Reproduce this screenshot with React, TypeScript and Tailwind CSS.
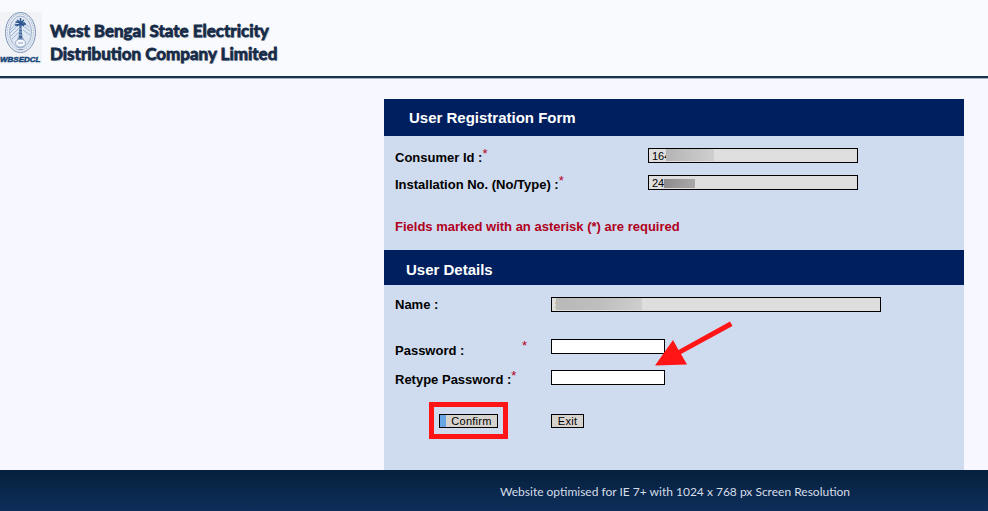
import type { ReactNode } from "react";

const field =
  "h-[15px] rounded-none border border-black px-[3px] font-['Liberation_Sans',Arial,sans-serif] text-[11px] leading-[13px] font-normal text-black outline-none";
const button =
  "h-[14px] cursor-pointer border border-black text-center font-['Liberation_Sans',Arial,sans-serif] text-[11px] leading-[12px] font-normal tracking-wide text-black";

function Star() {
  return <span className="block self-start text-[13px] leading-[13px] font-normal text-[#b8001c]">*</span>;
}

function Label({ htmlFor, children, required }: { htmlFor: string; children: ReactNode; required?: boolean }) {
  return (
    <label htmlFor={htmlFor} className="flex items-center">
      <span className="pt-px">{children}</span>
      {required && <Star />}
    </label>
  );
}

function Logo() {
  return (
    <svg viewBox="0 0 42 52" className="h-[52px] w-[42px] shrink-0" role="img" aria-label="WBSEDCL">
      <rect width="42" height="52" fill="#f1f3f6" />
      <ellipse cx="20.5" cy="20.5" rx="15" ry="20" fill="#e9eef5" stroke="#7e95b8" strokeWidth="1" />
      <ellipse cx="20.5" cy="20" rx="13" ry="18" fill="none" stroke="#b3c1d6" strokeWidth="1.2" strokeDasharray="1.5 1" />
      <ellipse cx="20.5" cy="20" rx="11" ry="16" fill="#dfe8f2" stroke="#8aa1c3" strokeWidth=".8" />
      <path d="M10 18L19 8M10 21L19 12M11 24L19 16M12 27L19 20M22 10l7 5M22 13l8 6M23 18l7 5" stroke="#8fa9cc" strokeWidth=".8" />
      <path d="M20.500 6v8M15.500 10l9.500 1M15 13l11-1M17 8l7 6M24 8l-7 6" stroke="#2c568f" strokeWidth="1.5" />
      <path d="M19.500 13h2l1 14h-4z" fill="#3f659b" />
      <path d="M19 17h3M19 20h3M19 23h3" stroke="#dfe8f2" strokeWidth=".7" />
      <ellipse cx="20.500" cy="31" rx="5" ry="4" fill="#f5f7fa" stroke="#8098ba" strokeWidth=".8" />
      <path d="M17 27h7M18 31h5M18 37.500h5" stroke="#7a93b8" strokeWidth=".9" />
      <text x="0" y="50" fill="#174579" stroke="#174579" strokeWidth=".5" fontFamily="Liberation Sans" fontStyle="italic" fontWeight="700" fontSize="8">
        WBSEDCL
      </text>
    </svg>
  );
}

export default function App() {
  return (
    <div className="flex min-h-screen flex-col bg-[#f7f8ff] font-['Liberation_Sans',Arial,sans-serif] text-black">
      <header className="flex h-[78px] items-start gap-2 border-b-2 border-[#17324d] bg-[#f8fafd] pt-3 shadow-[0_1px_0_#a9b4c0]">
        <Logo />
        <h1 className="pt-[7px] font-[Lato,Carlito,sans-serif] text-[17px] leading-[23px] font-bold whitespace-nowrap text-[#162b48] [-webkit-text-stroke:0.8px_#162b48] [text-shadow:1px_1px_1px_#b5bfcc]">
          West Bengal State Electricity
          <br />
          Distribution Company Limited
        </h1>
      </header>

      <main className="flex flex-1 justify-end pt-[21px] pr-6">
        <form className="w-[580px] bg-[#cfdbee] text-[13px] leading-5 font-bold" onSubmit={(e) => e.preventDefault()}>
          <h2 className="flex h-[37px] items-center bg-[#001f5f] pl-[25px] text-[15px] text-white">User Registration Form</h2>
          <section className="px-[11px] pt-[11px] pb-[13px]">
            <div className="grid h-[27px] grid-cols-[253px_1fr] items-start">
              <Label htmlFor="consumer" required>Consumer Id :</Label>
              <div className="relative mt-px flex">
                <input id="consumer" readOnly defaultValue="164" className={`${field} w-[210px] bg-[#dedede]`} />
                <span className="absolute top-px left-[18px] h-[12px] w-12 bg-linear-to-r from-[#b5b5b5] to-[#cecece]" />
              </div>
            </div>
            <div className="grid h-[27px] grid-cols-[253px_1fr] items-start">
              <Label htmlFor="installation" required>Installation No. (No/Type) :</Label>
              <div className="relative mt-px flex">
                <input id="installation" readOnly defaultValue="24" className={`${field} w-[210px] bg-[#dedede]`} />
                <span className="absolute top-1 left-4 h-[9px] w-[31px] bg-linear-to-r from-[#8d8b8c] to-[#aaa8aa]" />
              </div>
            </div>
            <p className="mt-4 text-[#b0001c]">Fields marked with an asterisk (*) are required</p>
          </section>

          <h2 className="flex h-[35px] items-center bg-[#001f5f] pt-1 pl-[22px] text-[15px] text-white">User Details</h2>
          <section className="px-[11px] pt-[9px] pb-[31px]">
            <div className="grid h-[45px] grid-cols-[156px_1fr] items-start">
              <Label htmlFor="name">Name :</Label>
              <div className="relative mt-[3px] flex">
                <input id="name" readOnly defaultValue="S" className={`${field} w-[330px] bg-[#dedede]`} />
                <span className="absolute top-px left-[5px] h-[12px] w-[86px] bg-linear-to-r from-[#b9b9b9] via-[#bebebe] to-[#cecece]" />
              </div>
            </div>
            <div className="grid h-[30px] grid-cols-[127px_29px_1fr] items-start">
              <div className="pt-px">
                <Label htmlFor="password">Password :</Label>
              </div>
              <Star />
              <div className="relative flex">
                <input id="password" type="password" className={`${field} w-[114px] bg-white`} />
                <svg viewBox="0 0 78 46" className="pointer-events-none absolute -top-[18px] left-[104px] h-[46px] w-[78px]" aria-hidden="true">
                  <path d="M0 44.500L18 19L23.500 29L75 .5L77.500 5L26 33L32 43.500Z" fill="#ff1515" />
                </svg>
              </div>
            </div>
            <div className="grid h-[33px] grid-cols-[156px_1fr] items-start">
              <Label htmlFor="retype" required>Retype Password :</Label>
              <input id="retype" type="password" className={`${field} mt-px w-[114px] bg-white`} />
            </div>
            <div className="grid grid-cols-[156px_1fr] items-center">
              <div className="ml-[34px] flex h-[37px] w-[79px] items-center justify-center border-[5px] border-[#ff1515]">
                <button type="submit" className={`${button} w-[59px] bg-[linear-gradient(90deg,#67a5e5_6px,#d6d3ce_6px)] pl-[6px]`}>
                  Confirm
                </button>
              </div>
              <button type="button" className={`${button} w-[33px] bg-[#d6d3ce]`}>Exit</button>
            </div>
          </section>
        </form>
      </main>

      <footer className="flex h-[41px] justify-end bg-linear-to-b from-[#06203d] to-[#0e2f5b] pr-6">
        <p className="w-[580px] pt-[13px] pl-[116px] font-[Lato,Carlito,sans-serif] text-xs leading-[18px] text-[#d5dde8]">
          Website optimised for IE 7+ with 1024 x 768 px Screen Resolution
        </p>
      </footer>
    </div>
  );
}
